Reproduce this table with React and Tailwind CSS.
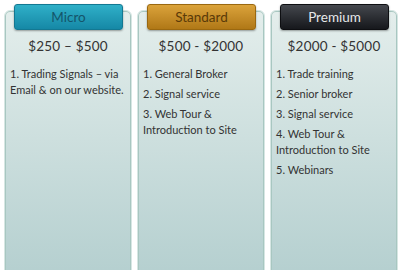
const PLANS = [
  {
    name: 'Micro',
    price: '$250 – $500',
    tab: 'bg-gradient-to-b from-[#2fb0c8] to-[#1588a6] text-[#14556a] border-[#137892]',
    items: ['1. Trading Signals – via Email & on our website.'],
  },
  {
    name: 'Standard',
    price: '$500 - $2000',
    tab: 'bg-gradient-to-b from-[#dba33a] to-[#b07816] text-[#5a3a08] border-[#9a6810]',
    items: ['1. General Broker', '2. Signal service', '3. Web Tour & Introduction to Site'],
  },
  {
    name: 'Premium',
    price: '$2000 - $5000',
    tab: 'bg-gradient-to-b from-[#45484e] to-[#16181c] text-[#e6e8ea] border-[#0e0f12]',
    items: [
      '1. Trade training',
      '2. Senior broker',
      '3. Signal service',
      '4. Web Tour & Introduction to Site',
      '5. Webinars',
    ],
  },
]

function PlanCard({ plan }) {
  return (
    <div className="w-[128px] h-[270px] mt-[10px] shrink-0 rounded-t-[6px] border border-[#d6e6e3] shadow-[inset_0_0_0_1px_#a8c7c1] bg-gradient-to-b from-[#e4eeec] to-[#b4cfcf] flex flex-col">
      {/* tab */}
      <div
        className={`-mt-[7px] ml-[9px] mr-[8px] h-[26px] rounded-[3px] border flex items-center justify-center text-[13.5px] shadow-[0_1px_2px_rgba(0,0,0,0.35)] ${plan.tab}`}
      >
        {plan.name}
      </div>

      <p className="mt-[7px] text-center text-[13.5px] leading-[18px] tracking-[0.2px] text-[#333]">{plan.price}</p>

      <ul className="mt-[11px] pl-[5px] pr-[3px] flex flex-col gap-[4px] text-[11px] leading-[16px] text-[#333]">
        {plan.items.map((it) => (
          <li key={it}>{it}</li>
        ))}
      </ul>
    </div>
  )
}

export default function App() {
  return (
    <div
      className="w-[400px] h-[270px] overflow-hidden bg-white flex gap-[5px] pl-[4px]"
      style={{ fontFamily: 'Lato, "Liberation Sans", sans-serif' }}
    >
      {PLANS.map((p) => (
        <PlanCard key={p.name} plan={p} />
      ))}
    </div>
  )
}
